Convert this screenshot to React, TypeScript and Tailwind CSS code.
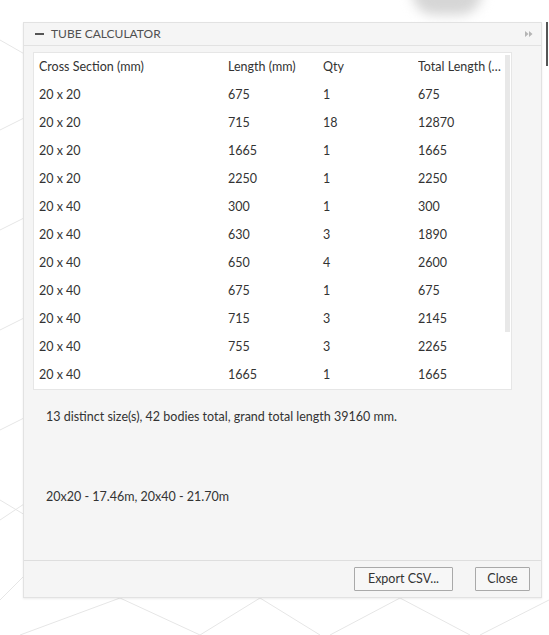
import React from "react";

const rows: [string, string, string, string][] = [
  ["20 x 20", "675", "1", "675"],
  ["20 x 20", "715", "18", "12870"],
  ["20 x 20", "1665", "1", "1665"],
  ["20 x 20", "2250", "1", "2250"],
  ["20 x 40", "300", "1", "300"],
  ["20 x 40", "630", "3", "1890"],
  ["20 x 40", "650", "4", "2600"],
  ["20 x 40", "675", "1", "675"],
  ["20 x 40", "715", "3", "2145"],
  ["20 x 40", "755", "3", "2265"],
  ["20 x 40", "1665", "1", "1665"],
];

function CanvasGrid() {
  // faint construction grid of the viewport behind the palette
  const lines: [number, number, number, number][] = [
    [0, 40, 70, 80],
    [0, 130, 60, 100],
    [0, 230, 60, 200],
    [0, 330, 60, 300],
    [0, 430, 60, 400],
    [0, 520, 60, 480],
    [0, 600, 40, 560],
    [20, 635, 120, 598],
    [120, 598, 200, 635],
    [200, 635, 260, 598],
    [260, 598, 320, 635],
    [330, 635, 400, 598],
    [400, 598, 470, 635],
    [480, 635, 549, 600],
    [0, 500, 50, 530],
  ];
  return (
    <svg className="absolute inset-0" width="549" height="635">
      {lines.map(([x1, y1, x2, y2], i) => (
        <line key={i} x1={x1} y1={y1} x2={x2} y2={y2} stroke="#e6e6e6" strokeWidth="1" />
      ))}
    </svg>
  );
}

export default function App() {
  return (
    <div
      className="relative w-[549px] h-[635px] overflow-hidden bg-white text-[#333]"
      style={{ fontFamily: 'Lato, "Noto Sans", sans-serif' }}
    >
      <CanvasGrid />
      {/* view cube shadow */}
      <div className="absolute left-[412px] top-[-30px] w-[70px] h-[45px] rounded-full bg-[#d6d6d6] blur-[6px]" />
      <div className="absolute left-[546px] top-[22px] w-[2px] h-[44px] bg-[#555]" />

      <div className="relative ml-[23px] mt-[22px] w-[519px] h-[576px] flex flex-col bg-[#f5f5f5] border border-[#e2e2e2] shadow-[0_1px_2px_rgba(0,0,0,0.08)]">
        {/* title bar */}
        <div className="h-[23px] flex items-center border-b border-[#e2e2e2] pl-[11px] pr-[8px]">
          <div className="w-[9px] h-[2px] bg-[#555] mr-[7px]" />
          <span className="text-[12px] text-[#505050]">TUBE CALCULATOR</span>
          <div className="ml-auto flex">
            <svg width="8" height="6" viewBox="0 0 8 6">
              <path d="M0 0 L3.5 3 L0 6 Z M4 0 L7.5 3 L4 6 Z" fill="#b5b5b5" />
            </svg>
          </div>
        </div>

        {/* body */}
        <div className="flex-1 flex flex-col pl-[9px] pt-[6px]">
          <div className="relative w-[479px] h-[338px] bg-white border border-[#e6e6e6] text-[12.5px]">
            <div className="flex h-[28px] items-center pl-[5px]">
              <div className="w-[189px]">Cross Section (mm)</div>
              <div className="w-[95px]">Length (mm)</div>
              <div className="w-[95px]">Qty</div>
              <div className="w-[86px] truncate">Total Length (mm)</div>
            </div>
            {rows.map((r, i) => (
              <div key={i} className="flex h-[28px] items-center pl-[5px]">
                <div className="w-[189px]">{r[0]}</div>
                <div className="w-[95px]">{r[1]}</div>
                <div className="w-[95px]">{r[2]}</div>
                <div className="w-[86px]">{r[3]}</div>
              </div>
            ))}
            {/* scrollbar */}
            <div className="absolute right-[1px] top-[2px] w-[5px] h-[277px] bg-[#e8e8e8]" />
          </div>

          <div className="pl-[13px] mt-[18px] text-[12.5px] leading-[18px]">
            13 distinct size(s), 42 bodies total, grand total length 39160 mm.
          </div>
          <div className="pl-[13px] mt-[62px] text-[12.5px] leading-[18px]">
            20x20 - 17.46m, 20x40 - 21.70m
          </div>
        </div>

        {/* footer */}
        <div className="h-[37px] border-t border-[#dedede] flex items-center justify-end pr-[11px] gap-[22px]">
          <button className="h-[24px] w-[99px] border border-[#a9a9a9] bg-[#f7f7f7] rounded-[1px] text-[12.5px] text-[#333]">
            Export CSV...
          </button>
          <button className="h-[24px] w-[55px] border border-[#a9a9a9] bg-[#f7f7f7] rounded-[1px] text-[12.5px] text-[#333]">
            Close
          </button>
        </div>
      </div>
    </div>
  );
}
